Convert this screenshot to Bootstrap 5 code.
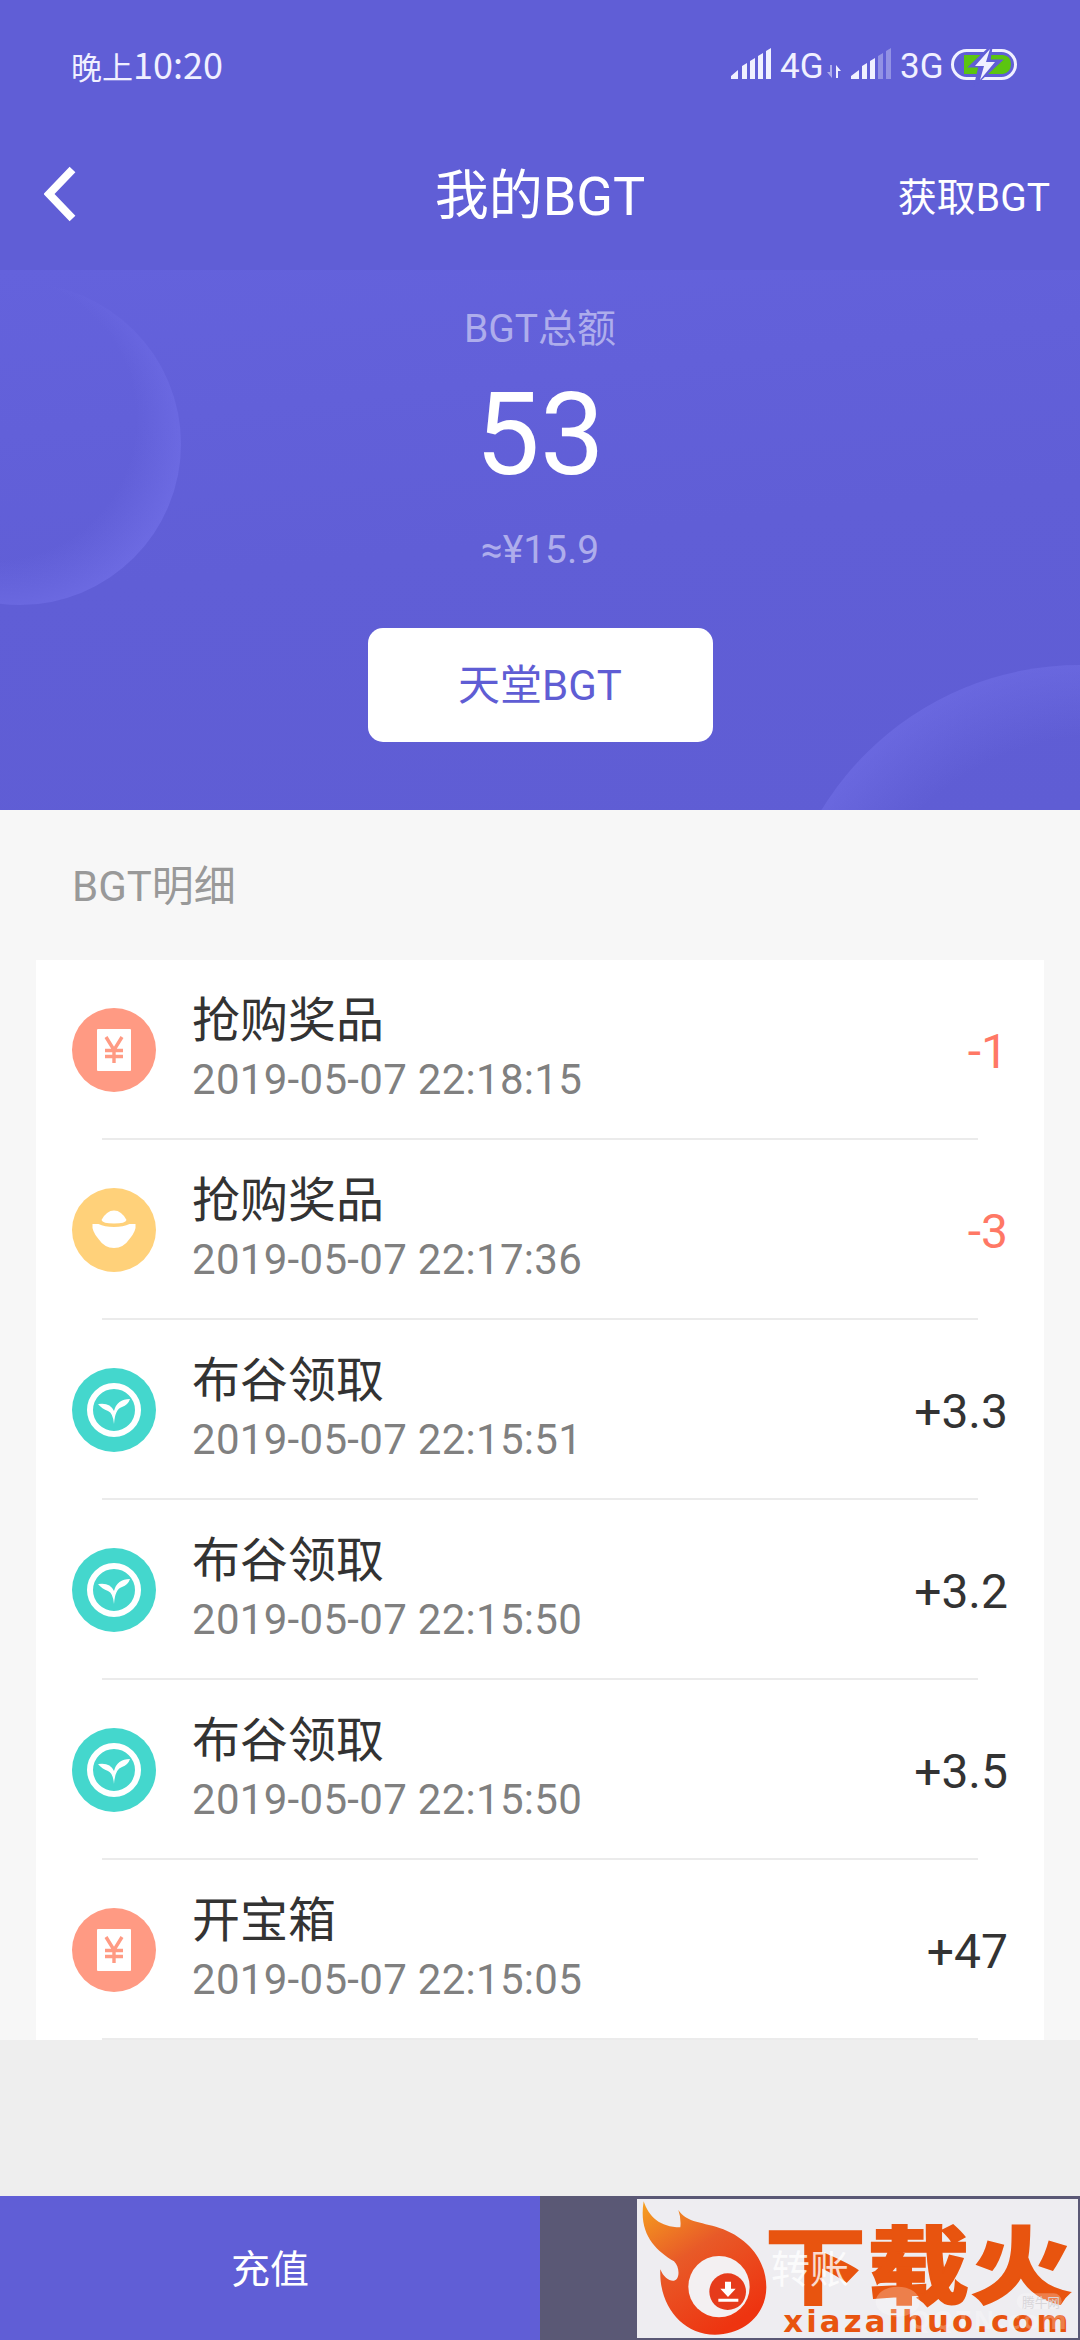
<!DOCTYPE html>
<html lang="zh-CN">

<head>
  <meta charset="UTF-8">
  <meta name="viewport" content="width=device-width, initial-scale=1.0">
  <title>我的BGT</title>
  <link rel="stylesheet" href="https://cdn.jsdelivr.net/npm/bootstrap@5.3.2/dist/css/bootstrap.min.css">
  <style>
    body {
      font-family: Roboto, "Noto Sans CJK SC", sans-serif;
      background: #f7f7f7;
      color: #333;
      line-height: 1.2;
    }
    .screen { width: 1080px; height: 2340px; }
    .topbar { height: 270px; background: #605ed6; }
    .statusbar { height: 129px; padding: 0 63px 0 71px; font-size: 31px; color: #f0f0ff; }
    .status-time { font-family: "Noto Sans CJK SC", sans-serif; line-height: 44px; }
    .status-time b { font-size: 36px; font-weight: 400; }
    .titlebar { height: 135px; padding: 0 30px 2px 44px; }
    .titlebar h1 { font-size: 54px; font-weight: 400; line-height: 64px; padding-top: 3px; }
    .titlebar a { font-size: 39px; padding-top: 5px; }
    .titlebar svg { margin-bottom: 3px; }
    .hero { height: 540px; background: linear-gradient(174deg, #6462dc, #605ed6 50%, #5f5dd4); }
    .hero-label { font-size: 39px; line-height: 46px; color: #aeadec; }
    .hero-content { padding-top: 36px; }
    .hero-total { font-size: 115px; line-height: 120px; margin-top: 23px; }
    .hero-btn { width: 345px; height: 114px; border-radius: 15px; font-size: 42px; color: #5f5dd4; margin-top: 55px; }
    .section-title { height: 150px; padding: 4px 0 0 72px; font-size: 42px; color: #999; }
    .records { margin: 0 36px; height: 1080px; }
    .record-body { height: 178px; padding: 0 36px; }
    .record-line { height: 2px; margin: 0 66px; background: #ebebeb; }
    .record-icon { width: 84px; height: 84px; margin-top: 2px; }
    .record-text { margin-left: 36px; }
    .record-name { font-size: 48px; line-height: 56px; }
    .record-time { font-size: 42px; line-height: 50px; letter-spacing: .3px; color: #808080; margin-top: 6px; }
    .record-amount { font-size: 48px; margin-top: 5px; }
    .minus { color: #ff7865; }
    .gap-area { height: 156px; background: #eee; }
    .actions { height: 144px; font-size: 39px; }
    .actions span { padding-top: 5px; }
    .action-in { background: #605ed6; }
    .action-out { background: #5a5875; }
    .action-out span { z-index: 2; opacity: .8; }
    .stamp { left: 97px; top: 3px; z-index: 1; }
  </style>
</head>

<body>

<div class="screen d-flex flex-column overflow-hidden">
  <header class="topbar text-white">
    <div class="statusbar d-flex justify-content-between align-items-center">
      <span class="status-time">晚上<b>10:20</b></span>
      <svg width="290" height="52" viewBox="0 -8 290 52" fill="#f0f0ff">
        <!-- first signal -->
        <path d="M4 32v-3l7-6v9zM15 32V19l5-3v16zM23 32V14l5-3v21zM31 32V9l5-3v26zM39 32V4l5-3v31z"/>
        <text x="53" y="31" font-size="35">4G</text>
        <path d="M105 18v13l-5-6h3v-7z" opacity=".55"/>
        <path d="M109 31V18l5 6h-3v7z"/>
        <!-- second signal, two bars off -->
        <path d="M124 32v-3l8-6v9zM135 32V19l5-3v16zM143 32V14l5-3v21z"/>
        <path d="M151 32V9l5-3v26zM159 32V4l5-3v31z" opacity=".35"/>
        <text x="173" y="31" font-size="35">3G</text>
        <!-- battery -->
        <rect x="225.500" y="3.500" width="63" height="28" rx="14" fill="none" stroke="#f0f0ff" stroke-width="3"/>
        <path d="M237 8h39q8 1 8 9t-8 10h-39z" fill="#5bc510"/>
        <path d="M264 0L244 19h9l-4 17 24-22h-11z" fill="#605ed6" stroke="#605ed6" stroke-width="3"/>
        <path d="M263 2L248 19h9l-4 14 15-18h-9z"/>
      </svg>
    </div>
    <div class="titlebar d-flex align-items-center position-relative">
      <svg width="34" height="56" viewBox="0 0 34 56"><path d="M28.500 3.500L5 28l23.500 24.500" fill="none" stroke="#fff" stroke-width="8"/></svg>
      <h1 class="position-absolute start-0 end-0 text-center m-0">我的BGT</h1>
      <a href="#" class="ms-auto text-white text-decoration-none position-relative">获取BGT</a>
    </div>
  </header>

  <section class="hero position-relative text-white text-center">
    <svg class="position-absolute top-0 start-0" width="1080" height="540">
      <defs>
        <radialGradient id="glowLeft" cx=".42" cy=".42" r=".61">
          <stop offset=".72" stop-color="#8a88ff" stop-opacity="0"/>
          <stop offset="1" stop-color="#8a88ff" stop-opacity=".28"/>
        </radialGradient>
        <radialGradient id="glowRight" cx=".54" cy=".55" r=".57">
          <stop offset=".76" stop-color="#8a88ff" stop-opacity="0"/>
          <stop offset="1" stop-color="#8a88ff" stop-opacity=".26"/>
        </radialGradient>
      </defs>
      <circle cx="20" cy="174" r="161" fill="url(#glowLeft)"/>
      <circle cx="1080" cy="698" r="303" fill="url(#glowRight)"/>
    </svg>
    <div class="hero-content position-relative d-flex flex-column align-items-center">
      <div class="hero-label">BGT总额</div>
      <div class="hero-total">53</div>
      <div class="hero-label mt-4 pt-2">≈¥15.9</div>
      <button class="hero-btn btn btn-light bg-white border-0">天堂BGT</button>
    </div>
  </section>

  <div class="section-title d-flex align-items-center">BGT明细</div>

  <div class="records bg-white" id="records"></div>

  <div class="gap-area"></div>

  <footer class="actions d-flex text-white">
    <div class="action-in w-50 d-flex align-items-center justify-content-center"><span>充值</span></div>
    <div class="action-out w-50 d-flex align-items-center justify-content-center position-relative">
      <span class="position-relative">转账</span>
      <svg class="stamp position-absolute" width="441" height="139" viewBox="111 117 1323 417">
        <defs>
          <linearGradient id="flame" x1="0" y1="0" x2=".6" y2="1">
            <stop offset="0" stop-color="#f6a01e"/>
            <stop offset=".45" stop-color="#e85a28"/>
            <stop offset="1" stop-color="#ee3410"/>
          </linearGradient>
        </defs>
        <rect x="111" y="117" width="1323" height="417" fill="#eeedf1"/>
        <path d="M131 124C146 170 180 202 241 202Q244 175 235 150C260 190 310 185 370 208C450 240 499 305 499 382C499 465 430 524 345 524C245 524 176 435 181 328C190 352 208 364 222 362C240 358 240 322 222 304C165 270 115 220 131 124z" fill="url(#flame)"/>
        <circle cx="357" cy="380" r="92" fill="#f3f0f2"/>
        <circle cx="383" cy="395" r="55" fill="#e63b1b"/>
        <path d="M375 365h18v21h14l-23 25-23-25h14zM355 416h60v9h-60z" fill="#fff"/>
        <g fill="#e8540f">
          <text transform="translate(494 411) scale(1 .83)" font-family="Noto Sans CJK SC" font-weight="900" font-size="304" textLength="922" stroke="#e8540f" stroke-width="6">下载火</text>
          <text x="550" y="515" font-family="DejaVu Sans" font-weight="700" font-size="92" textLength="855" lengthAdjust="spacing">xiazaihuo.com</text>
        </g>
        <!-- faint second mark under the name -->
        <g fill="#fff" opacity=".25">
          <ellipse cx="893" cy="425" rx="66" ry="45"/>
          <rect x="1250" y="400" width="135" height="48" rx="24"/>
          <text x="930" y="508" font-family="Open Sans" font-weight="700" font-size="76" textLength="470">QQTN.com</text>
        </g>
        <text x="1266" y="440" font-family="Noto Sans CJK SC" font-size="38" fill="#d8d6da">腾牛网</text>
      </svg>
    </div>
  </footer>
</div>

<script src="https://cdn.jsdelivr.net/npm/bootstrap@5.3.2/dist/js/bootstrap.bundle.min.js"></script>
<script>
  const icons = {
    bill: `<circle cx="42" cy="42" r="42" fill="#ff9a83"/>
      <rect x="25" y="21" width="34" height="42" rx="1" fill="#fff"/>
      <path d="M34 29l8 13 8-13M42 42v13M33 42.500h18M33 48.500h18" fill="none" stroke="#ff9a83" stroke-width="3.400"/>`,
    ingot: `<circle cx="42" cy="42" r="42" fill="#ffd17a"/>
      <path d="M29.500 32q5-9.500 12.500-9.500T54.500 32q-1 3.500-12.500 3.500T29.500 32z" fill="#fff"/>
      <path d="M20.500 36h6q6 3 15.500 3t15.500-3h6q1 7-6 15-6 9-15.500 9t-15.500-9q-7-8-6-15z" fill="#fff"/>`,
    sprout: `<circle cx="42" cy="42" r="42" fill="#44d7cd"/>
      <circle cx="42" cy="42" r="24" fill="none" stroke="#fff" stroke-width="6"/>
      <path d="M26 36q12-2 16 7 3-12 16-12-2 6-8 8-7 2-8 17-1-11-6-13-6-2-10-7z" fill="#fff"/>`
  };

  const records = [
    { icon: 'bill', name: '抢购奖品', time: '2019-05-07 22:18:15', amount: '-1' },
    { icon: 'ingot', name: '抢购奖品', time: '2019-05-07 22:17:36', amount: '-3' },
    { icon: 'sprout', name: '布谷领取', time: '2019-05-07 22:15:51', amount: '+3.3' },
    { icon: 'sprout', name: '布谷领取', time: '2019-05-07 22:15:50', amount: '+3.2' },
    { icon: 'sprout', name: '布谷领取', time: '2019-05-07 22:15:50', amount: '+3.5' },
    { icon: 'bill', name: '开宝箱', time: '2019-05-07 22:15:05', amount: '+47' }
  ];

  document.getElementById('records').innerHTML = records.map(item => `
    <div>
      <div class="record-body d-flex align-items-center">
        <svg class="record-icon flex-shrink-0" viewBox="0 0 84 84">${icons[item.icon]}</svg>
        <div class="record-text">
          <div class="record-name">${item.name}</div>
          <div class="record-time">${item.time}</div>
        </div>
        <div class="record-amount ms-auto ${item.amount[0] === '-' ? 'minus' : ''}">${item.amount}</div>
      </div>
      <div class="record-line"></div>
    </div>
  `).join('');
</script>
</body>
</html>
